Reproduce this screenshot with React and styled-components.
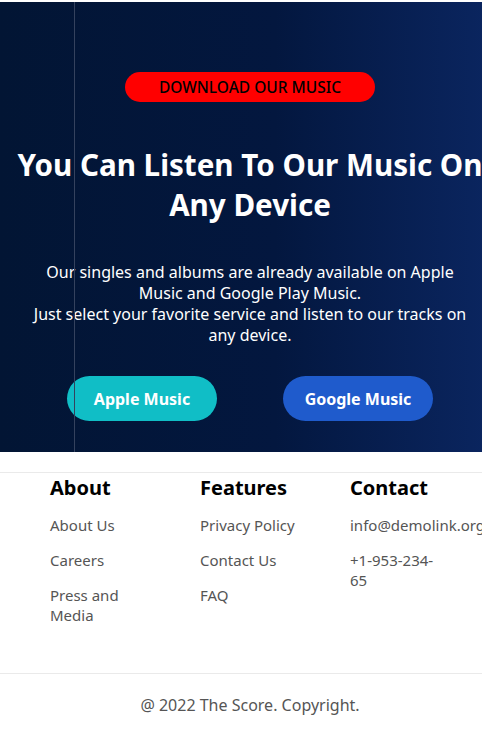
import styled, { createGlobalStyle } from "styled-components";

const Global = createGlobalStyle`
  html, body {
    margin: 0;
    padding: 0;
    overflow-x: hidden;
    background: #ffffff;
  }
  body {
    font-family: "Noto Sans", "Noto Sans CJK KR", sans-serif;
  }
`;

const columns = [
  { title: "About", links: ["About Us", "Careers", "Press and Media"] },
  { title: "Features", links: ["Privacy Policy", "Contact Us", "FAQ"] },
  { title: "Contact", links: ["info@demolink.org", "+1-953-234-65"] },
];

export default function App() {
  return (
    <Page>
      <Global />
      <Hero>
        <Rule />
        <Download>DOWNLOAD OUR MUSIC</Download>
        <Title>
          You Can Listen To Our Music On
          <br />
          Any Device
        </Title>
        <Text>
          Our singles and albums are already available on Apple Music and
          Google Play Music.
          <br />
          Just select your favorite service and listen to our tracks on any
          device.
        </Text>
        <Stores>
          <Store $bg="#10bec6">Apple Music</Store>
          <Store $bg="#1f5bcc">Google Music</Store>
        </Stores>
      </Hero>

      <Footer>
        <Columns>
          {columns.map((col) => (
            <Column key={col.title}>
              <h3>{col.title}</h3>
              {col.links.map((l) => (
                <a key={l}>{l}</a>
              ))}
            </Column>
          ))}
        </Columns>
        <Copy>@ 2022 The Score. Copyright.</Copy>
      </Footer>
    </Page>
  );
}

const Page = styled.div`
  width: 500px;
  padding-top: 2px;
`;

const Hero = styled.section`
  position: relative;
  height: 450px;
  box-sizing: border-box;
  padding-top: 70px;
  display: flex;
  flex-direction: column;
  align-items: center;
  background: linear-gradient(90deg, #021534 0%, #03173f 55%, #0b2661 100%);
  color: #ffffff;
`;

// thin vertical hairline seen over the hero background
const Rule = styled.div`
  position: absolute;
  left: 74px;
  top: 0;
  bottom: 0;
  width: 1px;
  background: #34425e;
`;

const Download = styled.button`
  width: 250px;
  height: 30px;
  border: none;
  border-radius: 15px;
  background: #ff0000;
  color: #000000;
  font-family: inherit;
  font-size: 15.5px;
  font-weight: 500;
  padding: 0;
  cursor: pointer;
`;

const Title = styled.h1`
  margin: 43px 0 0;
  font-size: 29.6px;
  line-height: 40px;
  font-weight: 700;
  text-align: center;
  white-space: nowrap;
`;

const Text = styled.p`
  margin: 37px 0 0;
  width: 440px;
  font-size: 16px;
  line-height: 21px;
  text-align: center;
`;

const Stores = styled.div`
  margin-top: 30px;
  display: flex;
  gap: 66px;
`;

const Store = styled.button`
  width: 150px;
  height: 45px;
  border: none;
  border-radius: 23px;
  background: ${(p) => p.$bg};
  color: #ffffff;
  font-family: inherit;
  font-size: 16px;
  font-weight: 700;
  cursor: pointer;
`;

const Footer = styled.footer`
  margin-top: 20px;
  border-top: 1px solid #eaeaea;
`;

const Columns = styled.div`
  display: grid;
  grid-template-columns: repeat(3, 100px);
  column-gap: 50px;
  padding: 3px 50px 48px;
  border-bottom: 1px solid #eaeaea;
`;

const Column = styled.div`
  display: flex;
  flex-direction: column;
  gap: 15px;

  h3 {
    margin: 0;
    font-size: 20px;
    line-height: 24px;
    font-weight: 700;
    color: #000000;
  }

  a {
    font-size: 15px;
    line-height: 20px;
    color: #555555;
  }
`;

const Copy = styled.p`
  margin: 0;
  padding: 21px 0 20px;
  text-align: center;
  font-size: 16px;
  line-height: 20px;
  color: #555555;
`;
